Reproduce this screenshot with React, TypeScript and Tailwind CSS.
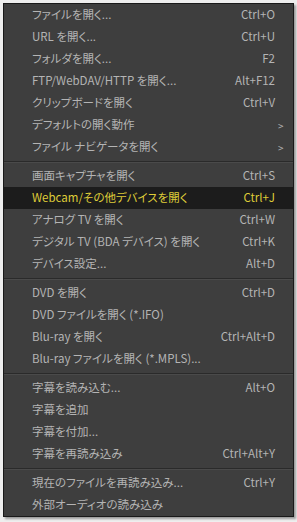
type Item = { label: string; shortcut?: string; sub?: boolean; active?: boolean } | "sep";

const items: Item[] = [
  { label: "ファイルを開く...", shortcut: "Ctrl+O" },
  { label: "URL を開く...", shortcut: "Ctrl+U" },
  { label: "フォルダを開く...", shortcut: "F2" },
  { label: "FTP/WebDAV/HTTP を開く...", shortcut: "Alt+F12" },
  { label: "クリップボードを開く", shortcut: "Ctrl+V" },
  { label: "デフォルトの開く動作", sub: true },
  { label: "ファイル ナビゲータを開く", sub: true },
  "sep",
  { label: "画面キャプチャを開く", shortcut: "Ctrl+S" },
  { label: "Webcam/その他デバイスを開く", shortcut: "Ctrl+J", active: true },
  { label: "アナログ TV を開く", shortcut: "Ctrl+W" },
  { label: "デジタル TV (BDA デバイス) を開く", shortcut: "Ctrl+K" },
  { label: "デバイス設定...", shortcut: "Alt+D" },
  "sep",
  { label: "DVD を開く", shortcut: "Ctrl+D" },
  { label: "DVD ファイルを開く (*.IFO)" },
  { label: "Blu-ray を開く", shortcut: "Ctrl+Alt+D" },
  { label: "Blu-ray ファイルを開く (*.MPLS)..." },
  "sep",
  { label: "字幕を読み込む...", shortcut: "Alt+O" },
  { label: "字幕を追加" },
  { label: "字幕を付加..." },
  { label: "字幕を再読み込み", shortcut: "Ctrl+Alt+Y" },
  "sep",
  { label: "現在のファイルを再読み込み...", shortcut: "Ctrl+Y" },
  { label: "外部オーディオの読み込み" },
];

export default function App() {
  return (
    <div className="w-[297px] h-[522px] bg-[#eeeeee] overflow-hidden pt-[3px] pl-[3px]">
      <div className="w-[291px] border border-[#191919] bg-[#3e3e3e] shadow-[2px_2px_2px_rgba(0,0,0,0.35)] font-['Noto_Sans_CJK_JP','Noto_Sans',sans-serif] text-[11.5px] [font-feature-settings:'palt'] text-[#b4b4b4]">
        {items.map((it, i) =>
          it === "sep" ? (
            <div key={i} className="h-[7px] flex flex-col justify-center">
              <div className="h-px bg-[#2a2a2a]" />
              <div className="h-px bg-[#4a4a4a]" />
            </div>
          ) : (
            <div
              key={i}
              className={`h-[22px] flex items-center pl-[28px] ${
                it.active ? "bg-[#1c1c1c] text-[#dfcc38]" : ""
              }`}
            >
              <span className="flex-1 whitespace-nowrap">{it.label}</span>
              {it.shortcut && <span className="whitespace-nowrap">{it.shortcut}</span>}
              <span className="w-[18px] text-[10px] pl-[3px]">{it.sub ? ">" : ""}</span>
            </div>
          )
        )}
      </div>
    </div>
  );
}
